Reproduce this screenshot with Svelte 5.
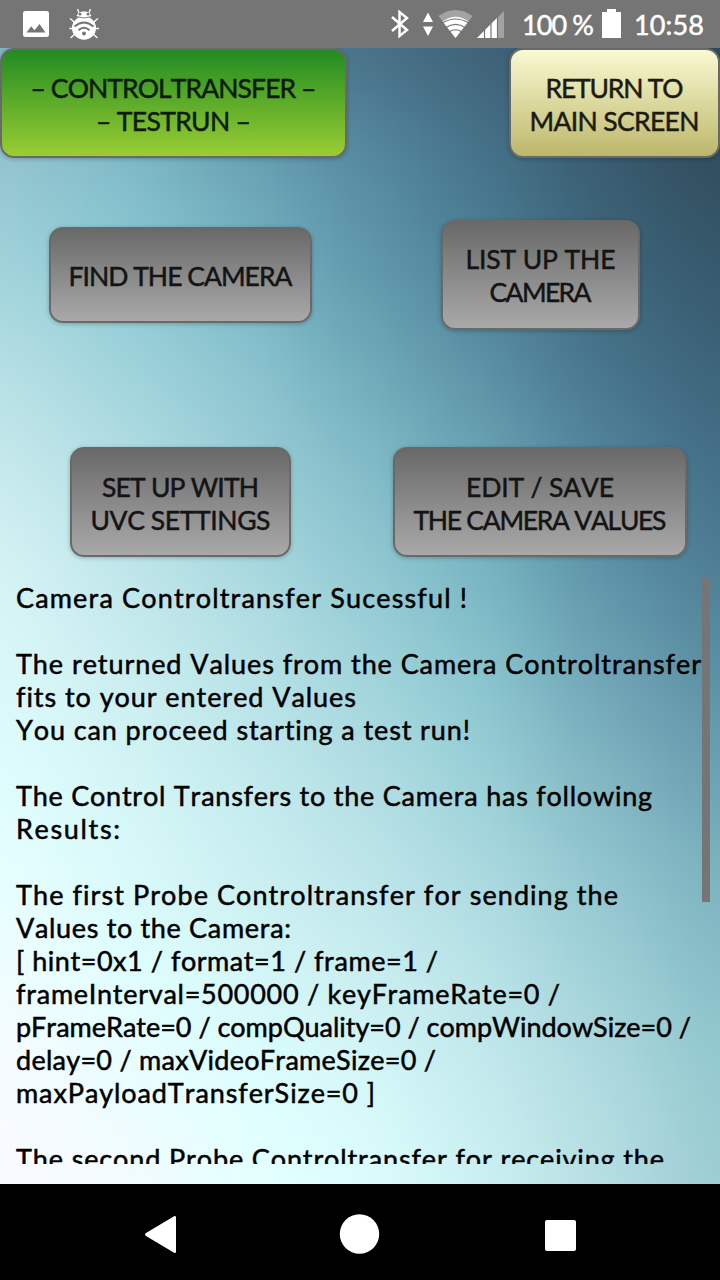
<script>
  const W = 720;
  const mesh = [
    ['#84b3c0', '#6597a3', '#528499', '#486f86', '#3f6177', '#365368', '#2f4856'],
    ['#94c5cf', '#82bcc9', '#6ba4b5', '#568ba2', '#45738a', '#395b70', '#304b5a'],
    ['#9fd1d9', '#8ac8d2', '#75b3c2', '#6097ab', '#4c8096', '#3d657a', '#35566a'],
    ['#b4dfe4', '#9fd3da', '#8bc5d0', '#6fabba', '#5b90a4', '#46738a', '#3b6178'],
    ['#c6e9ec', '#b2dee4', '#9bcdd6', '#82bcc8', '#69a4b4', '#51849b', '#436e86'],
    ['#d6f3f5', '#c0e7ea', '#abdae0', '#93cad3', '#78b6c2', '#5c93a7', '#4c7c93'],
    ['#dbf8f9', '#cceef0', '#b9e3e7', '#a2d4db', '#88c5ce', '#6ea3b5', '#5b8da2'],
    ['#dffdfe', '#d4f5f6', '#c4ebee', '#b1dee3', '#9ad0d7', '#80b5c1', '#6b9eb1'],
    ['#e6feff', '#dafafa', '#ccf0f2', '#bfe6ea', '#abdae0', '#92c6cf', '#7bb1be'],
    ['#f0fdff', '#e1ffff', '#d6f7f8', '#cbeff1', '#bae4e8', '#a1d1d8', '#88bec7'],
    ['#f7fbff', '#ebfdff', '#dfffff', '#d6f8f9', '#c5ebee', '#b0dbe0', '#94cacf'],
    ['#fafaff', '#f5fbff', '#e6ffff', '#ddfefe', '#cdf1f3', '#b7dfe3', '#9ccbd2']
  ];
  const buttons = [
    { lines: [['FIND THE CAMERA', 224]], w: 263, h: 96, cls: 'find' },
    { lines: [['LIST UP THE', 150], ['CAMERA', 102]], w: 199, h: 110, cls: 'list' },
    { lines: [['SET UP WITH', 157], ['UVC SETTINGS', 180]], w: 221, h: 110, cls: 'setup' },
    { lines: [['EDIT / SAVE', 148], ['THE CAMERA VALUES', 253]], w: 294, h: 110, cls: 'edit' }
  ];
  const log = [
    ['Camera Controltransfer Sucessful !', 451],
    null,
    ['The returned Values from the Camera Controltransfer', 685],
    ['fits to your entered Values', 340],
    ['You can proceed starting a test run!', 454],
    null,
    ['The Control Transfers to the Camera has following', 636],
    ['Results:', 104],
    null,
    ['The first Probe Controltransfer for sending the', 602],
    ['Values to the Camera:', 275],
    ['[ hint=0x1 / format=1 / frame=1 /', 422],
    ['frameInterval=500000 / keyFrameRate=0 /', 544],
    ['pFrameRate=0 / compQuality=0 / compWindowSize=0 /', 675],
    ['delay=0 / maxVideoFrameSize=0 /', 420],
    ['maxPayloadTransferSize=0 ]', 359],
    null,
    ['The second Probe Controltransfer for receiving the', 648]
  ];

  // Spreads the letters of one line over the given width.
  function fit(node, width) {
    const apply = () => {
      node.style.letterSpacing = '0px';
      const natural = node.getBoundingClientRect().width;
      const gap = (width - natural) / (node.textContent.length - 1);
      node.style.letterSpacing = gap + 'px';
      node.style.marginRight = -gap + 'px';
    };
    apply();
    document.fonts?.ready.then(apply);
  }
</script>

{#snippet label(lines)}
  {#each lines as [text, width]}
    <span class="row"><span class="txt" use:fit={width}>{text}</span></span>
  {/each}
{/snippet}

<div class="screen">
  <header class="status">
    <svg class="photo" width="26" height="26" viewBox="0 0 26 26"><path fill="#fff" fill-rule="evenodd" d="M2.500 0h21A2.500 2.500 0 0 1 26 2.500v21a2.500 2.500 0 0 1-2.500 2.500h-21A2.500 2.500 0 0 1 0 23.500v-21A2.500 2.500 0 0 1 2.500 0zM3.500 21.500h19l-6-8.500-5 6.300-3.300-4z"/></svg>
    <svg class="bug" width="31" height="33" viewBox="0 0 31 33">
      <g fill="none" stroke="#fff" stroke-width="1.300"><path d="M10 5 8.500 1M20 5l1.500-4M5 14 3 12 1 10.500M25 14l2-2 2-1.500M4 20.500H0.500M26 20.500h4M6 26l-4.500 4M24 26l4.500 4"/></g>
      <path d="M7.500 9C7.500 1.500 22.500 1.500 22.500 9z" fill="#fff"/>
      <ellipse cx="15" cy="20" rx="12" ry="11.800" fill="#fff"/>
      <g fill="#757575"><circle cx="11" cy="6.200" r="1.400"/><circle cx="19" cy="6.200" r="1.400"/><circle cx="15" cy="25.500" r="2"/></g>
      <g fill="none" stroke="#757575"><path d="M7 8.500q8 3 16 0" stroke-width="0.900"/><path d="M5.500 18.500c6-5 13-5 19 0M9.500 22.200c3.500-3.200 7.500-3.200 11 0" stroke-width="2"/></g>
    </svg>
    <div class="right">
      <svg width="115" height="32" viewBox="0 0 115 32">
        <path d="M3 9 18 22l-7.500 6V4L18 10 3 23" fill="none" stroke="#fff" stroke-width="2.500"/>
        <path d="M39 4.500 44 14H34zM39 28l-5-9.500h10z" fill="#fff"/>
        <path d="M49.500 8Q66.500-4 83.500 8L66.500 30z" fill="#a3a3a3"/>
        <path d="M53.500 13.500Q66.500 4 79.500 13.500L66.500 30z" fill="#fff"/>
        <path d="M52.500 15.500q14-9 28 0M56.500 19.800q10-7 20 0M60 24q6.500-4.500 13 0" fill="none" stroke="#757575" stroke-width="1.200"/>
        <path d="M115 3v27H88z" fill="#a3a3a3"/><path d="M108 10v20H88z" fill="#fff"/>
        <path d="M95.500 20v11M102 14v17M108.500 8v23" stroke="#757575" stroke-width="1.200"/>
      </svg>
      <span class="txt pct" use:fit={72}>100 %</span>
      <svg class="battery" width="19" height="29" viewBox="0 0 19 29"><path d="M5 0h9v3h5v26H0V3h5z" fill="#fff"/></svg>
      <span class="txt clock" use:fit={70}>10:58</span>
    </div>
  </header>

  <main>
    <svg class="backdrop" viewBox="0 0 720 1136" preserveAspectRatio="none" aria-hidden="true">
      <defs>
        <filter id="soft" x="-20%" y="-20%" width="140%" height="140%" color-interpolation-filters="sRGB"><feGaussianBlur stdDeviation="46"/></filter>
      </defs>
      <g filter="url(#soft)">
        {#each mesh as row, r}
          {#each row as color, c}
            <rect
              x={c === 0 ? -200 : (c - 0.5) * W / 6}
              y={r === 0 ? -200 : (r - 0.5) * 103.3}
              width={c === 0 ? 261 : c === 6 ? 300 : 121}
              height={r === 0 ? 253 : r === 11 ? 300 : 105}
              fill={color}
            />
          {/each}
        {/each}
      </g>
    </svg>

    <div class="top">
      <button class="green">{@render label([['– CONTROLTRANSFER –', 286], ['– TESTRUN –', 155]])}</button>
      <button class="khaki">{@render label([['RETURN TO', 138], ['MAIN SCREEN', 170]])}</button>
    </div>

    <div class="grid">
      {#each buttons as b}
        <button class={b.cls} style="width:{b.w}px;height:{b.h}px">{@render label(b.lines)}</button>
      {/each}
    </div>

    <section class="log">
      <div class="lines">
        {#each log as line}
          <p>{#if line}<span class="txt" use:fit={line[1]}>{line[0]}</span>{/if}</p>
        {/each}
      </div>
      <div class="thumb"></div>
    </section>
  </main>

  <nav>
    <svg width="720" height="96" viewBox="0 0 720 96" fill="#fff">
      <path d="M174.500 32 146 49q-2 1.500 0 3l28.500 17q1.500.5 1.500-1.500v-34q0-2-1.500-1.500z"/>
      <circle cx="359.500" cy="50" r="19.700"/>
      <rect x="545" y="36" width="31" height="31" rx="2"/>
    </svg>
  </nav>
</div>

<style>
  :global(body) { margin: 0; overflow: hidden; }
  .screen {
    width: 720px; height: 1280px; display: flex; flex-direction: column; overflow: hidden;
    font-family: Lato, "Open Sans", sans-serif; font-size: 27px; line-height: 33px; color: #000;
  }
  .txt { display: inline-block; white-space: pre; font-kerning: none; font-variant-ligatures: none; -webkit-text-stroke: 0.5px currentColor; }
  .status { height: 48px; flex: none; background: #757575; color: #fff; display: flex; align-items: flex-start; box-sizing: border-box; padding: 11px 16px 0 23px; }
  .bug { margin: -3px 0 0 20px; }
  .right { margin-left: auto; display: flex; align-items: flex-start; }
  .right svg { margin-top: -3px; }
  .pct { margin-left: 18px; margin-top: -3px; }
  .right .battery { margin: -2px 13px 0 8px; }
  .clock { margin-top: -3px; }
  .status .txt { font-size: 27px; }
  main { position: relative; height: 1136px; flex: none; overflow: hidden; display: flex; flex-direction: column; }
  .backdrop { position: absolute; inset: 0; width: 100%; height: 100%; }
  .top { position: relative; display: flex; justify-content: space-between; height: 110px; }
  button {
    box-sizing: border-box; border: 2px solid #696969; border-radius: 14px; padding: 3px 0 0;
    display: flex; flex-direction: column; align-items: center; justify-content: center;
    font: inherit; font-size: 26.5px; color: #141414; background: linear-gradient(#696969, #a9a9a9);
    box-shadow: 0 1px 4px rgba(0, 0, 0, 0.25);
  }
  .row { display: block; height: 33px; }
  .green { width: 347px; height: 110px; background: linear-gradient(#228b22, #9acd32); color: #0c1c08; }
  .khaki { width: 211px; height: 110px; background: linear-gradient(#fafad2, #bdb76b); color: #1c1b10; }
  .grid {
    position: relative; display: grid; height: 419px;
    grid-template-columns: 361px 359px; grid-template-rows: 235px 219px;
    align-items: center; justify-items: center;
  }
  .find, .list { margin-bottom: 2px; }
  .setup, .edit { margin-bottom: 2px; padding-top: 5px; }
  .edit { margin-right: 1px; }
  .log { position: relative; display: flex; justify-content: space-between; height: 587px; padding: 0 10px 0 16px; overflow: hidden; }
  .lines { width: 686px; flex: none; padding-top: 4px; }
  p { margin: 0; height: 33px; }
  .thumb { width: 8px; height: 325px; background: #757575; flex: none; }
  nav { height: 96px; flex: none; background: #000; }
  nav svg { display: block; }
</style>
